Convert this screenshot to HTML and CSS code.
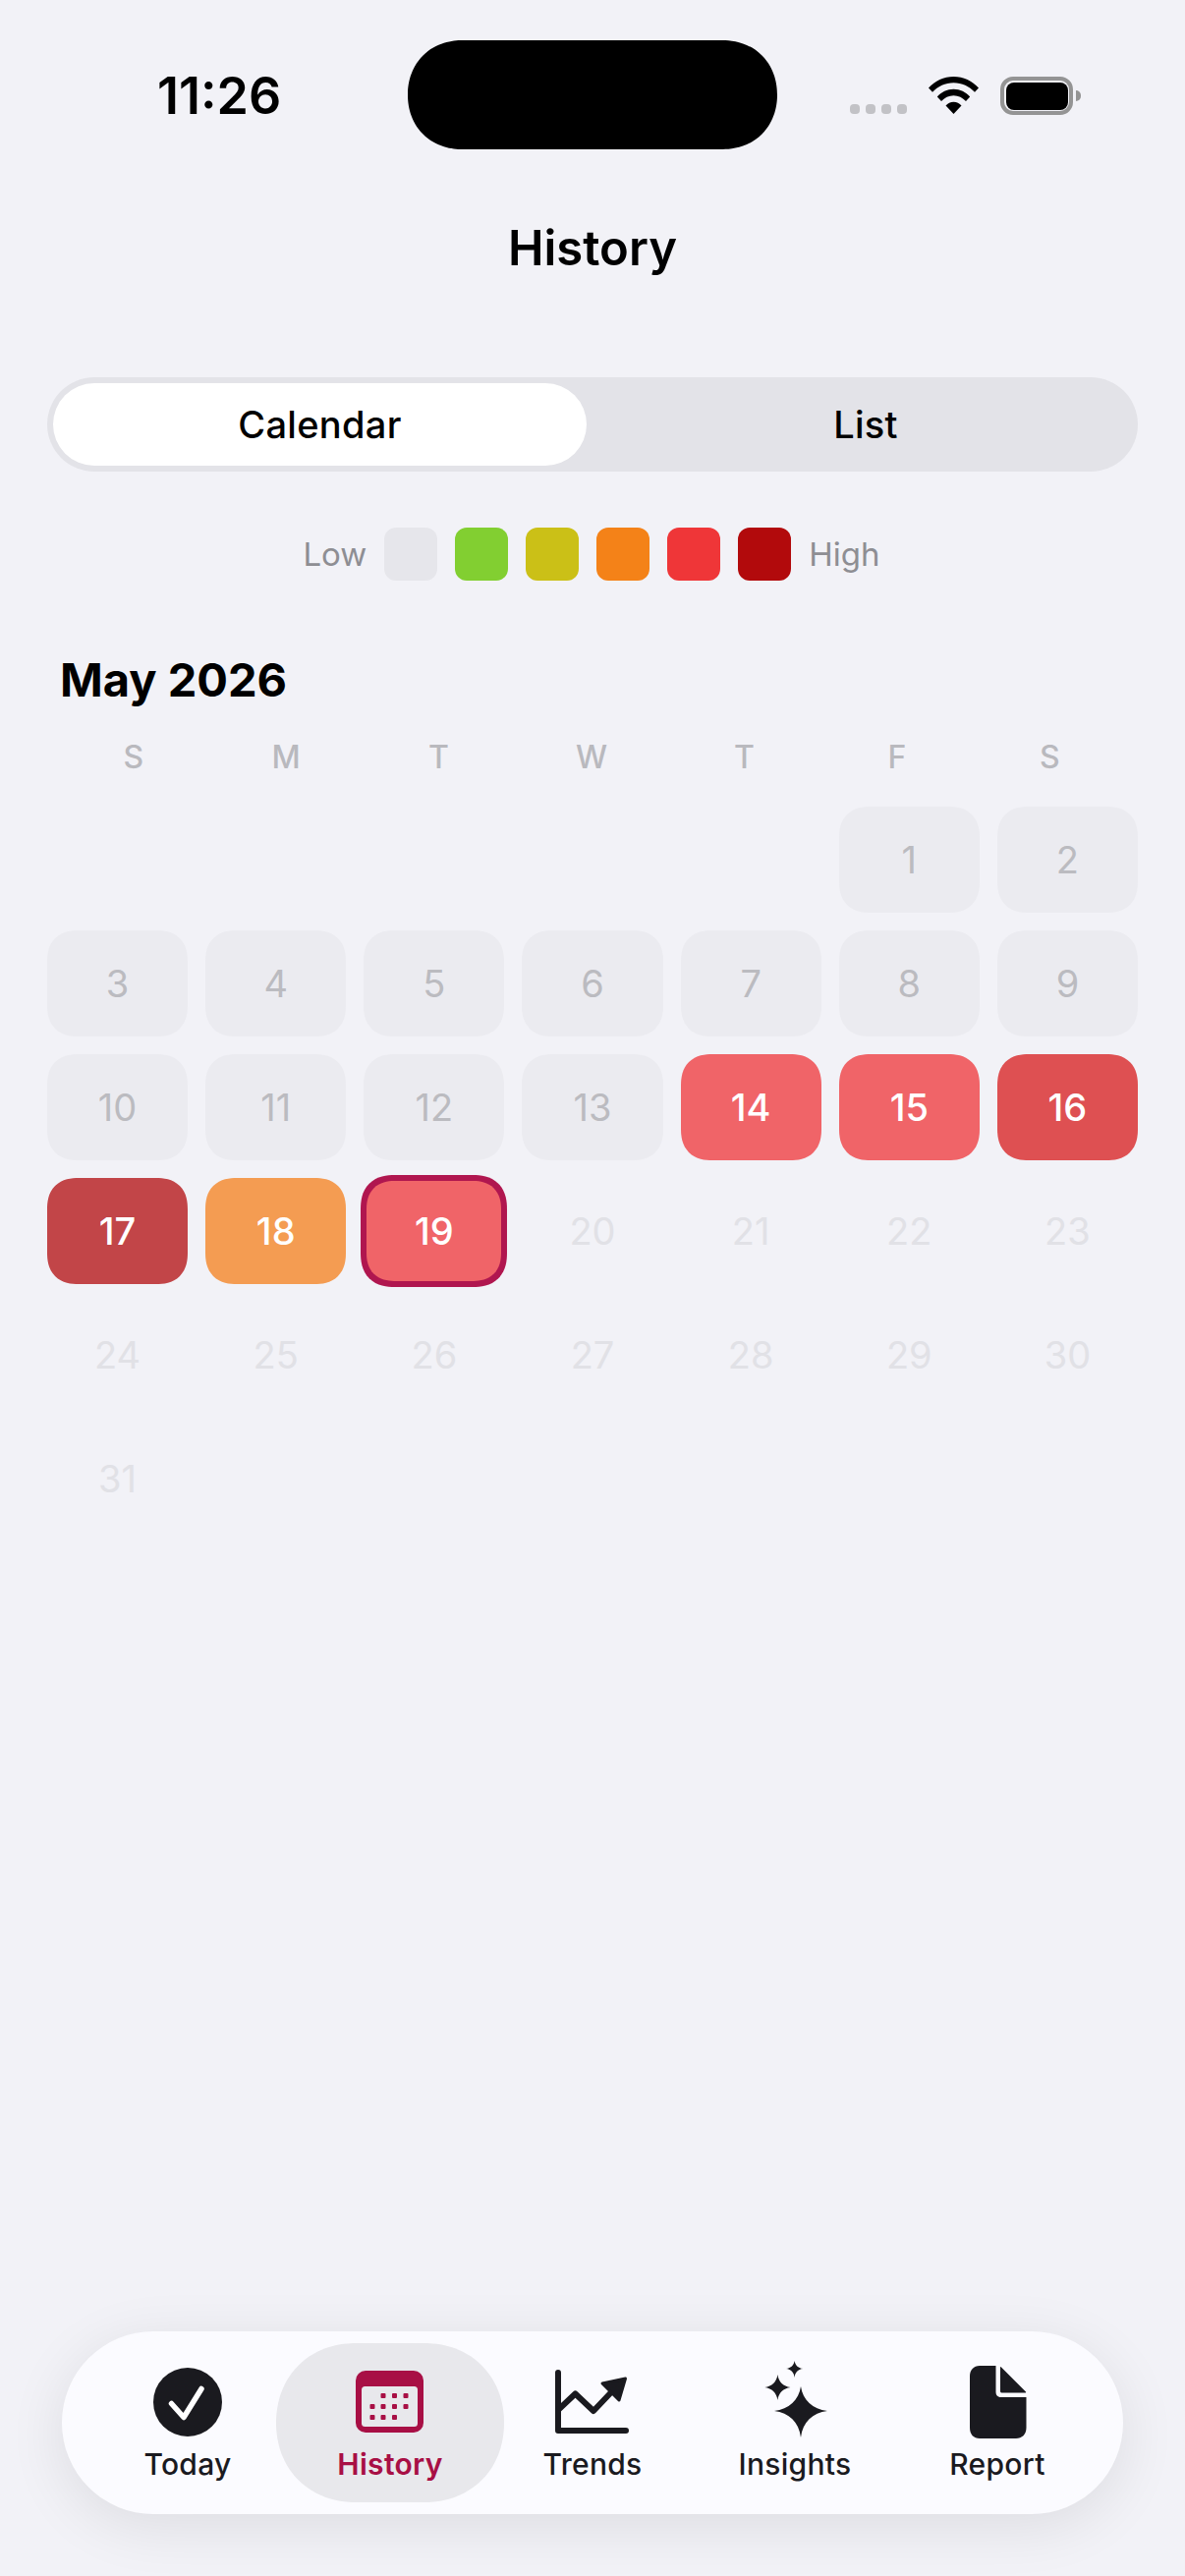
FILE: index.html
```html
<!DOCTYPE html>
<html lang="en">
<head>
<meta charset="utf-8">
<title>History</title>
<link rel="stylesheet" href="styles.css">
</head>
<body>
<div class="page">
  <header class="status">
    <span class="time">11:26</span>
    <div class="island"></div>
    <div class="status-icons">
      <div class="signal"><i></i><i></i><i></i><i></i></div>
      <svg class="wifi" width="51" height="38" viewBox="0 0 51 38"><path d="M0 11.5C6.5 4.3 15.5 0 25.5 0S44.500 4.300 51 11.500L47 15.800C41.500 9.800 34 6.200 25.500 6.200S9.500 9.800 4 15.800Z"/><path d="M8.800 20.500C13 15.800 19 12.800 25.500 12.800S38 15.800 42.200 20.500L38 25C34.800 21.400 30.400 19.200 25.500 19.200S16.200 21.400 13 25Z"/><path d="M17.500 29.500C19.500 27.200 22.300 25.800 25.500 25.800S31.500 27.200 33.500 29.500L25.500 38Z"/></svg>
      <div class="battery"><div class="battery-fill"></div></div>
      <div class="battery-cap"></div>
    </div>
  </header>

  <h1 class="title">History</h1>

  <div class="segment">
    <div class="seg-item seg-active">Calendar</div>
    <div class="seg-item seg-plain">List</div>
  </div>

  <div class="legend">
    <span class="legend-label">Low</span>
    <i class="swatch sw0"></i><i class="swatch sw1"></i><i class="swatch sw2"></i><i class="swatch sw3"></i><i class="swatch sw4"></i><i class="swatch sw5"></i>
    <span class="legend-label">High</span>
  </div>

  <h2 class="month">May 2026</h2>
  <div class="weekdays">
    <span>S</span><span>M</span><span>T</span><span>W</span><span>T</span><span>F</span><span>S</span>
  </div>

  <div class="days">
    <div class="day blank"></div><div class="day blank"></div><div class="day blank"></div><div class="day blank"></div><div class="day blank"></div>
    <div class="day past">1</div><div class="day past">2</div>
    <div class="day past">3</div><div class="day past">4</div><div class="day past">5</div><div class="day past">6</div><div class="day past">7</div><div class="day past">8</div><div class="day past">9</div>
    <div class="day past">10</div><div class="day past">11</div><div class="day past">12</div><div class="day past">13</div>
    <div class="day lvl-red">14</div><div class="day lvl-red">15</div><div class="day lvl-strong">16</div>
    <div class="day lvl-dark">17</div><div class="day lvl-orange">18</div><div class="day lvl-red today">19</div>
    <div class="day future">20</div><div class="day future">21</div><div class="day future">22</div><div class="day future">23</div>
    <div class="day future">24</div><div class="day future">25</div><div class="day future">26</div><div class="day future">27</div><div class="day future">28</div><div class="day future">29</div><div class="day future">30</div>
    <div class="day future">31</div>
  </div>

  <nav class="tabbar">
    <div class="tab">
      <svg class="tab-icon" width="80" height="80" viewBox="0 0 80 80"><circle cx="40" cy="40" r="35" fill="#1a1a1f"/><path d="M23.500 41.500L36 55.500L54 26.500" fill="none" stroke="#fff" stroke-width="5.500" stroke-linecap="round" stroke-linejoin="round"/></svg>
      <span>Today</span>
    </div>
    <div class="tab tab-active">
      <svg class="tab-icon" width="80" height="80" viewBox="0 0 80 80"><rect x="5" y="8" width="69" height="63" rx="10" fill="#a80f45"/><rect x="11" y="24" width="57" height="41" rx="3.500" fill="#e8e8ec"/><g fill="#a80f45"><rect x="30.500" y="31" width="5" height="5" rx="1"/><rect x="42" y="31" width="5" height="5" rx="1"/><rect x="53.500" y="31" width="5" height="5" rx="1"/><rect x="19.500" y="42" width="5" height="5" rx="1"/><rect x="30.500" y="42" width="5" height="5" rx="1"/><rect x="42" y="42" width="5" height="5" rx="1"/><rect x="53.500" y="42" width="5" height="5" rx="1"/><rect x="19.500" y="53" width="5" height="5" rx="1"/><rect x="30.500" y="53" width="5" height="5" rx="1"/><rect x="42" y="53" width="5" height="5" rx="1"/></g></svg>
      <span>History</span>
    </div>
    <div class="tab">
      <svg class="tab-icon" width="80" height="80" viewBox="0 0 80 80"><path d="M5 10V69H74" fill="none" stroke="#1a1a1f" stroke-width="6" stroke-linecap="round" stroke-linejoin="round"/><path d="M5 48L22.500 31.500L41 49L60 29" fill="none" stroke="#1a1a1f" stroke-width="6" stroke-linejoin="round"/><path d="M50 21L73.500 16L67 38Z" fill="#1a1a1f" stroke="#1a1a1f" stroke-width="3" stroke-linejoin="round"/></svg>
      <span>Trends</span>
    </div>
    <div class="tab">
      <svg class="tab-icon" width="80" height="80" viewBox="0 0 80 80"><path d="M46 24C48 38 58 47 73 49C58 51 48 60 46 76C44 60 34 51 19 49C34 47 44 38 46 24Z" fill="#1a1a1f"/><path d="M22.400 12C23.400 19.500 28.400 24 35.400 25C28.400 26 23.400 30.500 22.400 38C21.400 30.500 16.400 26 9.400 25C16.400 24 21.400 19.500 22.400 12Z" fill="#1a1a1f"/><path d="M39.600 -2C40.300 2.500 43.100 5.300 48.100 6C43.100 6.700 40.300 9.500 39.600 15C38.900 9.500 36.100 6.700 31.100 6C36.100 5.300 38.900 2.500 39.600 -2Z" fill="#1a1a1f"/></svg>
      <span>Insights</span>
    </div>
    <div class="tab">
      <svg class="tab-icon" width="80" height="80" viewBox="0 0 80 80"><path d="M22 3H38.500V30C38.500 33 40.500 35 43.500 35H69.500V66C69.500 73 65 77 59 77H22C16 77 12 73 12 66V14C12 7 16 3 22 3Z" fill="#1a1a1f"/><path d="M43.500 4L69 29.500C69.500 30 69 30.500 68 30.500H45C44 30.500 43 30 43 29V4.500C43 4 43.300 3.800 43.500 4Z" fill="#1a1a1f"/></svg>
      <span>Report</span>
    </div>
  </nav>
</div>
</body>
</html>
```
FILE: styles.css
```css
* { box-sizing: border-box; }
html, body { margin: 0; padding: 0; }
body { background: #f2f2f7; font-family: Inter, "Liberation Sans", sans-serif; color: #000; }
.page { width: 1206px; height: 2622px; display: flex; flex-direction: column; overflow: hidden; }

.status { position: relative; height: 196px; padding: 66px 106px 0 160px; display: flex; justify-content: space-between; align-items: flex-start; }
.time { font-size: 52px; font-weight: 600; line-height: 64px; letter-spacing: 0; }
.island { position: absolute; left: 415px; top: 41px; width: 376px; height: 111px; border-radius: 56px; background: #000; corner-shape: superellipse(1.08); }
.status-icons { display: flex; align-items: flex-start; margin-top: 12px; }
.signal { display: flex; gap: 6px; margin-top: 28px; margin-right: 22px; }
.signal i { width: 10px; height: 10px; border-radius: 4px; background: #c2c2c6; }
.wifi { fill: #000; margin-right: 22px; }
.battery { width: 74px; height: 39px; border: 4px solid #949494; border-radius: 13px; padding: 1.500px; background: #f2f2f7; }
.battery-fill { width: 100%; height: 100%; background: #000; border-radius: 8px; }
.battery-cap { width: 5px; height: 11px; margin: 14px 0 0 3px; background: #949494; border-radius: 0 5px 5px 0; }

.title { margin: 27px 0 0; font-size: 49px; font-weight: 600; line-height: 60px; text-align: center; height: 60px; }

.segment { margin: 101px 48px 0; height: 96px; padding: 6px; display: grid; grid-template-columns: 543px 1fr; border-radius: 48px; background: #e3e3e8; }
.seg-item { display: flex; align-items: center; justify-content: center; font-size: 38px; font-weight: 500; letter-spacing: 0.3px; border-radius: 42px; }
.seg-active { background: #fff; }
.seg-plain { padding-left: 13px; }

.legend { margin-top: 57px; height: 54px; display: flex; justify-content: center; align-items: center; gap: 18px; padding-right: 2px; }
.legend-label { font-size: 33px; color: #8e8e93; }
.swatch { width: 54px; height: 54px; border-radius: 12px; }
.sw0 { background: #e6e6eb; }
.sw1 { background: #82cf31; }
.sw2 { background: #cbc017; }
.sw3 { background: #f48218; }
.sw4 { background: #ef3638; }
.sw5 { background: #b20a0c; }

.month { margin: 71px 0 0 61px; font-size: 47px; font-weight: 700; line-height: 60px; }

.weekdays { margin: 29px 60px 0 58px; display: grid; grid-template-columns: repeat(7, 1fr); text-align: center; font-size: 32px; font-weight: 500; line-height: 40px; color: #b9b9be; }

.days { margin: 30px 48px 0; display: grid; grid-template-columns: repeat(7, 1fr); grid-auto-rows: 108px; gap: 18px; }
.day { display: flex; align-items: center; justify-content: center; font-size: 38px; border-radius: 32px; corner-shape: superellipse(1.25); font-weight: 400; }
.past { background: #ebebf0; color: #bbbbc0; }
.future { color: #e1e1e6; }
.lvl-red { background: #f06468; color: #fff; font-weight: 450; }
.lvl-strong { background: #de5052; color: #fff; font-weight: 450; }
.lvl-dark { background: #c24548; color: #fff; font-weight: 450; }
.lvl-orange { background: #f49c52; color: #fff; font-weight: 450; }
.today { outline: 6px solid #b0164f; outline-offset: -3px; }

.tabbar { margin: auto 63px 63px; height: 186px; padding: 0 25px; display: grid; grid-template-columns: repeat(5, 1fr); border-radius: 93px; background: #fbfbff; box-shadow: 0 12px 60px rgba(0, 0, 0, 0.09); }
.tab { position: relative; display: flex; flex-direction: column; align-items: center; padding-top: 32px; font-size: 30px; font-weight: 450; letter-spacing: 0.3px; line-height: 40px; color: #1a1a1f; }
.tab > * { position: relative; }
.tab-icon { display: block; margin-bottom: 3px; overflow: visible; }
.tab-active { color: #a80f45; font-weight: 600; }
.tab-active::before { content: ""; position: absolute; left: -13px; right: -13px; top: 12px; bottom: 12px; border-radius: 81px; background: #e8e8ec; corner-shape: superellipse(1.08); }
```
